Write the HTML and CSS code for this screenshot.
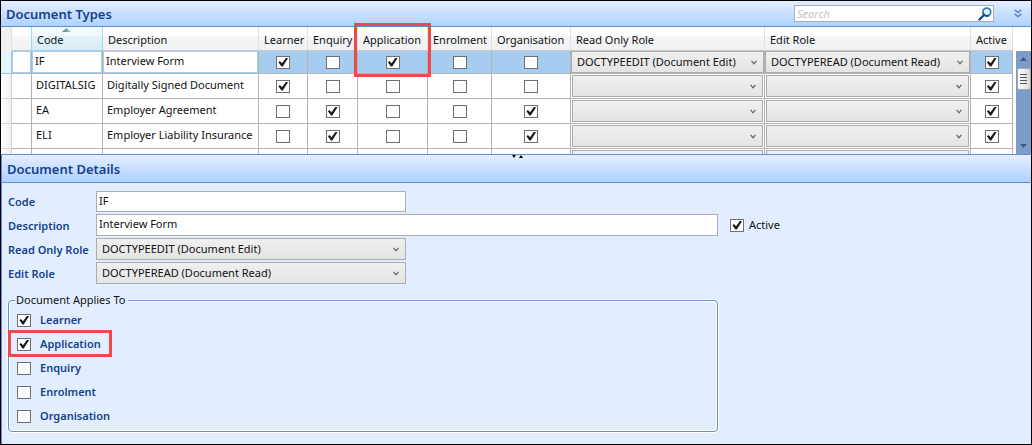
FILE: index.html
```html
<!DOCTYPE html>
<html lang="en">
<head>
<meta charset="utf-8">
<title>Document Types</title>
<link rel="stylesheet" href="styles.css">
</head>
<body>
<main class="app">
  <section class="types">
    <header class="bar">
      <h1 class="bar-title">Document Types</h1>
      <div class="search">
        <input class="search-input" type="search" placeholder="Search" aria-label="Search">
        <svg class="search-icon" viewBox="0 0 14 14" aria-hidden="true">
          <path d="M1.5 12.5 6 8" stroke="#1d4a8c" stroke-width="2.4" stroke-linecap="round"/>
          <circle cx="8.8" cy="5" r="3.9" fill="#e4f3ff" stroke="#2f7fc4" stroke-width="1.8"/>
          <path d="M5.2 6.2a3.9 3.9 0 0 0 5.6 2.2" fill="none" stroke="#1d4a8c" stroke-width="1.8"/>
        </svg>
      </div>
      <button class="collapse" type="button" aria-label="Collapse">
        <svg viewBox="0 0 8 9" width="8" height="9" aria-hidden="true"><path d="M.7.8 4 3.4 7.3.8M.7 5 4 7.6 7.3 5" fill="none" stroke="#6089c4" stroke-width="1.6"/></svg>
      </button>
    </header>
    <div class="grid-area">
      <table class="grid">
        <colgroup>
          <col class="c-head"><col class="c-blank"><col class="c-code"><col class="c-desc"><col class="c-learner"><col class="c-enquiry"><col class="c-app"><col class="c-enrol"><col class="c-org"><col class="c-read"><col class="c-edit"><col class="c-active">
        </colgroup>
        <thead>
          <tr>
            <th class="corner"></th><th></th>
            <th class="sorted">Code</th><th>Description</th><th>Learner</th><th>Enquiry</th>
            <th class="marked">Application<span class="mark mark-column"></span></th>
            <th>Enrolment</th><th>Organisation</th><th>Read Only Role</th><th>Edit Role</th><th>Active</th>
          </tr>
        </thead>
        <tbody>
          <tr class="selected">
            <td class="rowhead"></td><td class="edit"></td>
            <td class="edit"><input class="cell-input" value="IF" aria-label="Code"></td>
            <td class="edit"><input class="cell-input" value="Interview Form" aria-label="Description"></td>
            <td class="tick"><input type="checkbox" class="check" aria-label="Learner" checked></td>
            <td class="tick"><input type="checkbox" class="check" aria-label="Enquiry"></td>
            <td class="tick"><input type="checkbox" class="check" aria-label="Application" checked></td>
            <td class="tick"><input type="checkbox" class="check" aria-label="Enrolment"></td>
            <td class="tick"><input type="checkbox" class="check" aria-label="Organisation"></td>
            <td class="role"><select class="combo" aria-label="Read Only Role"><option>DOCTYPEEDIT (Document Edit)</option></select></td>
            <td class="role"><select class="combo" aria-label="Edit Role"><option>DOCTYPEREAD (Document Read)</option></select></td>
            <td class="tick"><input type="checkbox" class="check" aria-label="Active" checked></td>
          </tr>
          <tr>
            <td class="rowhead"></td><td></td><td>DIGITALSIG</td><td>Digitally Signed Document</td>
            <td class="tick"><input type="checkbox" class="check" aria-label="Learner" checked></td>
            <td class="tick"><input type="checkbox" class="check" aria-label="Enquiry"></td>
            <td class="tick"><input type="checkbox" class="check" aria-label="Application"></td>
            <td class="tick"><input type="checkbox" class="check" aria-label="Enrolment"></td>
            <td class="tick"><input type="checkbox" class="check" aria-label="Organisation"></td>
            <td class="role"><select class="combo" aria-label="Read Only Role"><option></option></select></td>
            <td class="role"><select class="combo" aria-label="Edit Role"><option></option></select></td>
            <td class="tick"><input type="checkbox" class="check" aria-label="Active" checked></td>
          </tr>
          <tr>
            <td class="rowhead"></td><td></td><td>EA</td><td>Employer Agreement</td>
            <td class="tick"><input type="checkbox" class="check" aria-label="Learner"></td>
            <td class="tick"><input type="checkbox" class="check" aria-label="Enquiry" checked></td>
            <td class="tick"><input type="checkbox" class="check" aria-label="Application"></td>
            <td class="tick"><input type="checkbox" class="check" aria-label="Enrolment"></td>
            <td class="tick"><input type="checkbox" class="check" aria-label="Organisation" checked></td>
            <td class="role"><select class="combo" aria-label="Read Only Role"><option></option></select></td>
            <td class="role"><select class="combo" aria-label="Edit Role"><option></option></select></td>
            <td class="tick"><input type="checkbox" class="check" aria-label="Active" checked></td>
          </tr>
          <tr>
            <td class="rowhead"></td><td></td><td>ELI</td><td>Employer Liability Insurance</td>
            <td class="tick"><input type="checkbox" class="check" aria-label="Learner"></td>
            <td class="tick"><input type="checkbox" class="check" aria-label="Enquiry" checked></td>
            <td class="tick"><input type="checkbox" class="check" aria-label="Application"></td>
            <td class="tick"><input type="checkbox" class="check" aria-label="Enrolment"></td>
            <td class="tick"><input type="checkbox" class="check" aria-label="Organisation" checked></td>
            <td class="role"><select class="combo" aria-label="Read Only Role"><option></option></select></td>
            <td class="role"><select class="combo" aria-label="Edit Role"><option></option></select></td>
            <td class="tick"><input type="checkbox" class="check" aria-label="Active" checked></td>
          </tr>
          <tr>
            <td class="rowhead"></td><td></td><td></td><td></td><td></td><td></td><td></td><td></td><td></td>
            <td class="role"><select class="combo" aria-label="Read Only Role"><option></option></select></td>
            <td class="role"><select class="combo" aria-label="Edit Role"><option></option></select></td>
            <td></td>
          </tr>
        </tbody>
      </table>
      <div class="scrollbar" aria-hidden="true">
        <svg class="arrow" viewBox="0 0 7 4"><path d="M0 4 3.5 0 7 4z" fill="#3f5687"/></svg>
        <span class="thumb"></span>
        <svg class="arrow arrow-down" viewBox="0 0 7 4"><path d="M0 0h7L3.5 4z" fill="#3f5687"/></svg>
      </div>
    </div>
  </section>

  <section class="details">
    <svg class="splitter" viewBox="0 0 11 3" aria-hidden="true"><path d="M0 0h4L2 3zM7 3h4L9 0z" fill="#000"/></svg>
    <header class="bar bar-details"><h2 class="bar-title">Document Details</h2></header>
    <form class="form">
      <label class="label" for="code">Code</label>
      <input class="field field-code" id="code" value="IF">
      <label class="label" for="description">Description</label>
      <input class="field field-wide" id="description" value="Interview Form">
      <label class="active"><input type="checkbox" class="check" checked>Active</label>
      <label class="label" for="read-role">Read Only Role</label>
      <select class="combo" id="read-role"><option>DOCTYPEEDIT (Document Edit)</option></select>
      <label class="label" for="edit-role">Edit Role</label>
      <select class="combo" id="edit-role"><option>DOCTYPEREAD (Document Read)</option></select>
      <fieldset class="applies">
        <legend class="legend">Document Applies To</legend>
        <label class="option"><input type="checkbox" class="check" checked>Learner</label>
        <label class="option"><input type="checkbox" class="check" checked>Application<span class="mark mark-option"></span></label>
        <label class="option"><input type="checkbox" class="check">Enquiry</label>
        <label class="option"><input type="checkbox" class="check">Enrolment</label>
        <label class="option"><input type="checkbox" class="check">Organisation</label>
      </fieldset>
    </form>
  </section>
</main>
</body>
</html>
```
FILE: styles.css
```css
* { box-sizing: border-box; }

body {
  margin: 0;
  font: 11px/16px "Noto Sans", "Open Sans", sans-serif;
  color: #111;
}

input, select, button { font: inherit; color: inherit; margin: 0; }

.app {
  display: flex;
  flex-direction: column;
  min-height: 100vh;
  border: 1px solid #000;
  background: #fff;
}

.bar {
  display: flex;
  align-items: center;
  height: 26px;
  padding: 0 9px 0 5px;
  border-bottom: 1px solid #6090d4;
  background: linear-gradient(#e3efff, #c9dfff 50%, #afd2ff);
}

.bar-title {
  flex: 1;
  margin: 0;
  font-size: 13px;
  line-height: 18px;
  font-weight: 600;
  color: #15428b;
}

.search {
  display: flex;
  align-items: center;
  width: 200px;
  height: 17px;
  padding: 0 1px 0 2px;
  border: 1px solid #abadb3;
  background: #fff;
}

.search-input {
  flex: 1;
  min-width: 0;
  height: 15px;
  padding: 0;
  border: 0;
  background: none;
  outline: 0;
}

.search-input::placeholder { color: #c4c4c4; font-style: italic; }
.search-icon { width: 14px; height: 14px; fill: none; }

.collapse {
  display: flex;
  margin-left: 20px;
  padding: 0;
  border: 0;
  background: none;
}

/* Grid */
.grid-area {
  display: flex;
  height: 127px;
}

.grid {
  flex: 1;
  width: 100%;
  table-layout: fixed;
  border-spacing: 0;
  align-self: flex-start;
}

.c-head { width: 11px; }
.c-blank { width: 20px; }
.c-code { width: 71px; }
.c-desc { width: 156px; }
.c-learner { width: 49px; }
.c-enquiry { width: 50px; }
.c-app { width: 70px; }
.c-enrol { width: 64px; }
.c-org { width: 79px; }
.c-read { width: 194px; }
.c-active { width: 42px; }

.grid th {
  height: 24px;
  padding: 2px 0 0 5px;
  border-right: 1px solid #dfe1e4;
  border-bottom: 1px solid #c6c8cb;
  background: linear-gradient(#fff 40%, #f5f6f7 40%, #f0f1f3);
  font-weight: 400;
  text-align: left;
  white-space: nowrap;
}

.grid th.corner { background: #f0f0f0; border-bottom-color: #f0f0f0; }

.grid th.sorted {
  position: relative;
  border-right-color: #96d9f9;
  border-bottom-color: #96d9f9;
  box-shadow: -1px 0 #96d9f9;
  background: linear-gradient(#f2f9fc 40%, #e1f1f9 40%, #d8ecf6);
}

.grid th.sorted::before {
  content: "";
  position: absolute;
  left: 30px;
  top: 1px;
  width: 9px;
  height: 4px;
  background: linear-gradient(90deg, #4d7795, #a9cfe4);
  clip-path: polygon(50% 0, 100% 100%, 0 100%);
}

.grid th.marked { position: relative; }

.grid td {
  height: 25px;
  padding: 0 0 2px 4px;
  border-right: 1px solid #b4b4b4;
  border-bottom: 1px solid #b4b4b4;
  background: #fff;
  white-space: nowrap;
}

.grid td.tick { padding: 0; }
.grid td.role { padding: 1px; }

.grid td.rowhead {
  padding: 0;
  border-color: #d5d5d5;
  background: linear-gradient(90deg, #fff, #f0f0f0);
}

.grid .selected td { height: 23px; background: #a6ccf0; }
.grid .selected td.rowhead { background: #e6f4fa; border-color: #8fcdf0; }
.grid .selected td.edit { padding: 0; background: #fff; box-shadow: inset 0 0 0 1px #a6ccf0; }
.grid .selected td.role { padding: 0; }

.cell-input {
  display: block;
  width: 100%;
  height: 22px;
  padding: 0 3px 3px;
  border: 0;
  background: none;
  outline: 0;
}

.check {
  appearance: none;
  display: block;
  position: relative;
  flex: none;
  width: 14px;
  height: 13px;
  border: 1px solid #707070;
  background: #fff;
}

.tick .check { margin: 0 auto; }

.check:checked::before {
  content: "";
  position: absolute;
  inset: 1px;
  background: #1c1c1c;
  clip-path: polygon(4% 52%, 20% 40%, 40% 64%, 80% 4%, 100% 8%, 48% 100%, 34% 100%);
}

.combo {
  appearance: none;
  display: block;
  width: 100%;
  height: 22px;
  padding: 0 16px 0 5px;
  border: 1px solid #acacac;
  border-radius: 0;
  background:
    url("data:image/svg+xml,%3Csvg xmlns='http://www.w3.org/2000/svg' width='6' height='5'%3E%3Cpath d='M.6.8 3 3.8 5.4.8' fill='none' stroke='%23606060' stroke-width='1.2'/%3E%3C/svg%3E") no-repeat right 6px top 8px,
    linear-gradient(#f0f0f0, #e4e4e4);
  outline: 0;
}

.scrollbar {
  display: flex;
  flex-direction: column;
  align-items: center;
  width: 15px;
  margin: 24px 0 0 3px;
  padding: 6px 0;
  background: #7c9dc9;
}

.arrow { width: 7px; height: 4px; }
.arrow-down { margin-top: auto; }

.thumb {
  width: 14px;
  height: 22px;
  margin-top: 7px;
  border: 1px solid #a8a8a8;
  border-radius: 2px;
  background:
    repeating-linear-gradient(#555 0 1px, transparent 1px 3px) no-repeat center / 7px 10px,
    linear-gradient(90deg, #fff, #d8dade);
}

.mark {
  position: absolute;
  z-index: 2;
  border: 3px solid #ee4a46;
  pointer-events: none;
}

.mark-column { left: -4px; top: -4px; width: 77px; height: 54px; }
.mark-option { left: -9px; top: -2px; width: 104px; height: 27px; }

/* Details */
.details {
  position: relative;
  z-index: 1;
  flex: 1;
  border-top: 1px solid #6090d4;
  border-left: 1px solid #6090d4;
  background: #e2eeff;
}

.splitter {
  position: absolute;
  left: 50%;
  top: 0;
  width: 11px;
  height: 3px;
  margin-left: -5px;
}

.bar-details { height: 28px; }

.form {
  display: grid;
  grid-template-columns: 88px 310px 312px 1fr;
  grid-auto-rows: 22px;
  row-gap: 2px;
  padding: 7px 6px 12px;
}

.label, .option { color: #15428b; font-weight: 600; }
.label { grid-column: 1; line-height: 24px; white-space: nowrap; }

.field {
  height: 22px;
  padding: 0 2px 3px;
  border: 1px solid #abadb3;
  background: #fff;
  outline: 0;
}

.field-code { height: 21px; align-self: end; }
.field-wide { grid-column: 2 / 4; }

.active {
  display: flex;
  align-items: center;
  gap: 5px;
  padding-left: 12px;
}

.applies {
  grid-column: 1 / 4;
  grid-row: 5 / 11;
  min-width: 0;
  height: 140px;
  margin: 6px 0 0;
  padding: 0 8px 3px;
  border: 1px solid #6090d4;
  border-radius: 4px;
  box-shadow: 0 0 0 1px #fff, inset 0 0 0 1px #fff;
}

.legend {
  padding: 0 3px 0 1px;
  margin-left: -2px;
  background: #e2eeff;
  font-size: 11px;
}

.option {
  position: relative;
  display: flex;
  align-items: center;
  gap: 9px;
  height: 24px;
}
```
